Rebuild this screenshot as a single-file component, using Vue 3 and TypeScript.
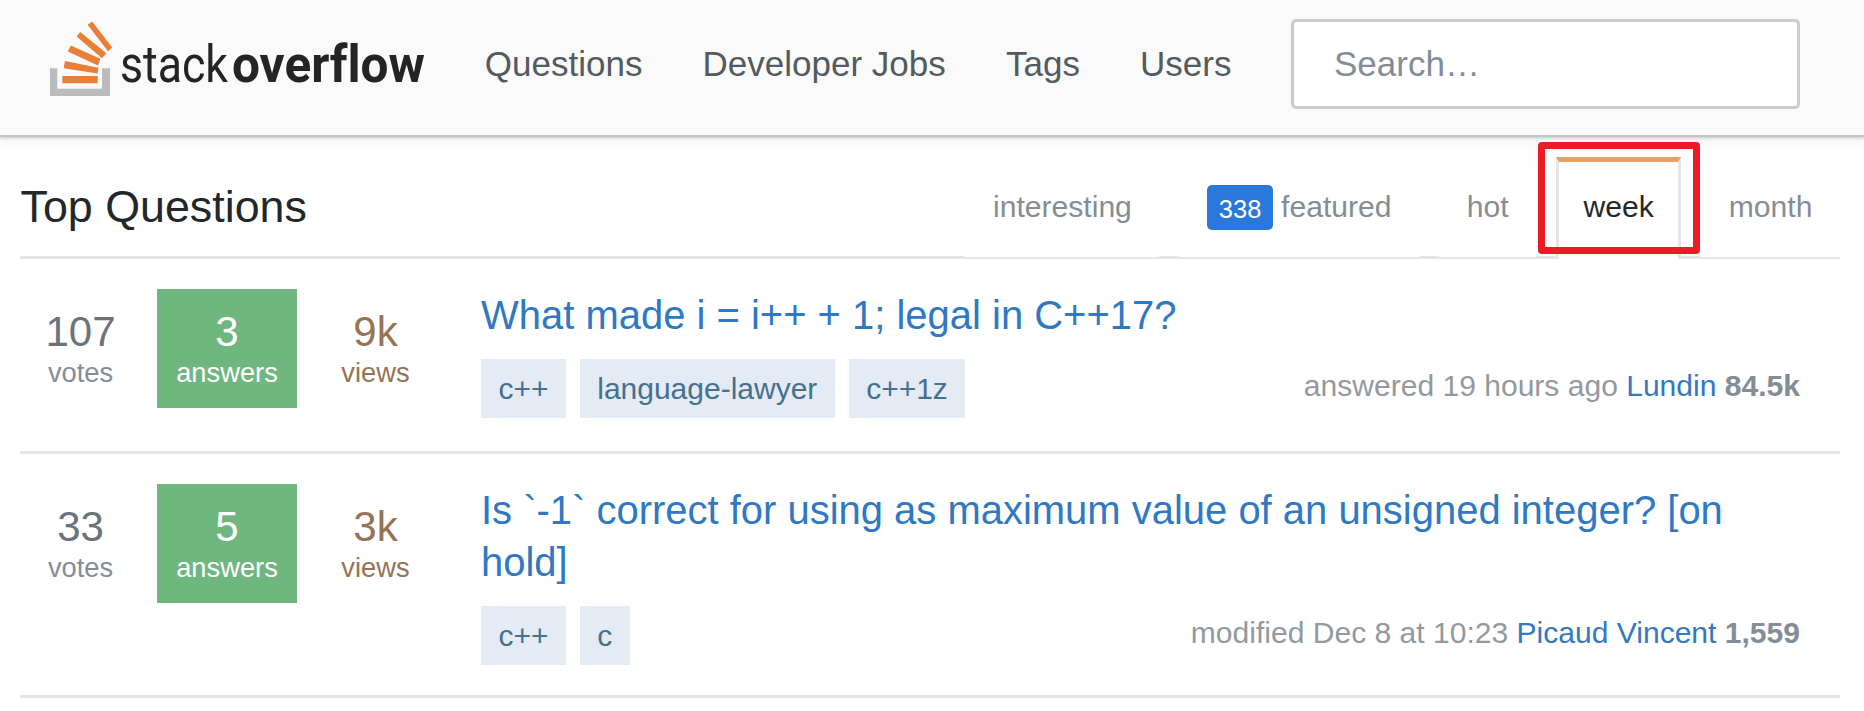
<script setup lang="ts">
interface Tab {
  label: string
  count?: number
  active?: boolean
}

interface Question {
  title: string
  votes: string
  answers: string
  views: string
  tags: string[]
  action: string
  user: string
  reputation: string
}

const links: string[] = ['Questions', 'Developer Jobs', 'Tags', 'Users']

const tabs: Tab[] = [
  { label: 'interesting' },
  { label: 'featured', count: 338 },
  { label: 'hot' },
  { label: 'week', active: true },
  { label: 'month' },
]

const questions: Question[] = [
  {
    title: 'What made i = i++ + 1; legal in C++17?',
    votes: '107',
    answers: '3',
    views: '9k',
    tags: ['c++', 'language-lawyer', 'c++1z'],
    action: 'answered 19 hours ago',
    user: 'Lundin',
    reputation: '84.5k',
  },
  {
    title: 'Is `-1` correct for using as maximum value of an unsigned integer? [on hold]',
    votes: '33',
    answers: '5',
    views: '3k',
    tags: ['c++', 'c'],
    action: 'modified Dec 8 at 10:23',
    user: 'Picaud Vincent',
    reputation: '1,559',
  },
]
</script>

<template>
  <div class="page">
    <header class="topbar">
      <svg class="logo" width="380" height="90" viewBox="50 19 380 90" role="img" aria-label="stack overflow">
        <path d="M50 68.3h7.3v20.4H102V68.3h8V96H50z" fill="#bbbbbb" />
        <g fill="#e87f37">
          <path d="M62.3 76h35.4v7.3H62.3z" />
          <path d="M64.9 61 98.4 67.8 97.6 73.4 63.7 68.3z" />
          <path d="M70.8 45.6 100.3 58.8 98 65.4 67.8 51.5z" />
          <path d="M80.2 31.9 106.5 53.2 102 58.2 76.6 36.4z" />
          <path d="M92.2 21.6 112.2 47.6 108 51.2 87.6 24.8z" />
        </g>
        <text class="word regular" x="120" y="82" textLength="108" lengthAdjust="spacingAndGlyphs">stack</text>
        <text class="word heavy" x="232" y="82" textLength="193" lengthAdjust="spacingAndGlyphs">overflow</text>
      </svg>
      <nav class="links">
        <a v-for="link in links" :key="link">{{ link }}</a>
      </nav>
      <input class="search" type="text" placeholder="Search…" />
    </header>

    <main class="main">
      <div class="bar">
        <h1>Top Questions</h1>
        <div class="tabs">
          <a v-for="tab in tabs" :key="tab.label" class="tab" :class="{ active: tab.active }">
            <span v-if="tab.count" class="badge">{{ tab.count }}</span>
            <span>{{ tab.label }}</span>
            <span v-if="tab.active" class="marker"></span>
          </a>
        </div>
      </div>

      <article v-for="q in questions" :key="q.title" class="question">
        <div class="stat votes">
          <span class="num">{{ q.votes }}</span>
          <span class="label">votes</span>
        </div>
        <div class="stat answers">
          <span class="num">{{ q.answers }}</span>
          <span class="label">answers</span>
        </div>
        <div class="stat views">
          <span class="num">{{ q.views }}</span>
          <span class="label">views</span>
        </div>
        <div class="summary">
          <h2>{{ q.title }}</h2>
          <div class="details">
            <div class="tags">
              <span v-for="tag in q.tags" :key="tag" class="tag">{{ tag }}</span>
            </div>
            <div class="meta">
              {{ q.action }} <a>{{ q.user }}</a> <b>{{ q.reputation }}</b>
            </div>
          </div>
        </div>
      </article>
    </main>
  </div>
</template>

<style>
body {
  background: #fff;
}
</style>

<style scoped>
.page {
  height: 711px;
  overflow: hidden;
  font-family: 'Liberation Sans', Arial, sans-serif;
  background: linear-gradient(#f7f7f7 137px, #fcfcfc 148px, #fff 172px);
}
.topbar {
  box-sizing: border-box;
  height: 137px;
  padding: 19px 64px 26px 50px;
  display: flex;
  align-items: center;
  background: #fafafa;
  border-bottom: 2px solid #c4c5c6;
  box-shadow: 0 1px 3px rgba(0, 0, 0, 0.2);
}
.logo {
  flex: none;
  overflow: visible;
}
.word {
  font-family: Roboto, 'Liberation Sans', sans-serif;
  font-size: 52px;
  font-variant-ligatures: none;
  fill: #222426;
}
.regular {
  font-weight: 400;
}
.heavy {
  font-weight: 700;
}
.links {
  display: flex;
  gap: 60.2px;
  margin-left: 54.8px;
  font-size: 35px;
  line-height: 90px;
  color: #535a60;
  white-space: nowrap;
}
.search {
  box-sizing: border-box;
  width: 509px;
  height: 90px;
  margin: 0 0 0 auto;
  padding: 0 40px;
  border: 3px solid #c8ccd0;
  border-radius: 5px;
  background: #fff;
  font: 35px 'Liberation Sans', Arial, sans-serif;
  outline: none;
}
.search::placeholder {
  color: #848d95;
  opacity: 1;
}
.main {
  padding: 20px 24px 0 20px;
}
.bar {
  display: flex;
  justify-content: space-between;
  height: 99px;
  border-bottom: 3px solid #e4e6e6;
}
h1,
h2 {
  margin: 0;
  font-weight: 400;
}
h1 {
  padding-left: 0.5px;
  font-size: 44.8px;
  line-height: 99px;
  color: #242729;
}
.tabs {
  display: flex;
  gap: 20px;
  height: 100px;
}
.tab {
  box-sizing: border-box;
  display: flex;
  align-items: center;
  gap: 8px;
  height: 100px;
  padding: 0 27.6px;
  border-bottom: 1px solid #fff;
  font-size: 30.1px;
  color: #848d95;
}
.tab.active {
  position: relative;
  align-items: flex-start;
  height: 102px;
  padding: 0 24.4px;
  border: 3px solid #e4e6e6;
  border-top: 5px solid #e8a064;
  border-bottom: 0;
  background: #fff;
  color: #242729;
  line-height: 89px;
}
.badge {
  width: 66px;
  height: 45px;
  margin-top: 2px;
  border-radius: 5px;
  background: #2a79da;
  color: #fff;
  font-size: 25.5px;
  line-height: 48px;
  text-align: center;
}
.marker {
  position: absolute;
  box-sizing: border-box;
  top: -20px;
  left: -21px;
  right: -21.5px;
  height: 112px;
  border: 7px solid #ed1c24;
  border-radius: 4px;
}
.question {
  box-sizing: border-box;
  display: flex;
  align-items: flex-start;
  min-height: 195px;
  padding: 30px 0;
  border-bottom: 3px solid #e4e6e6;
}
.stat {
  flex: none;
  box-sizing: border-box;
  display: flex;
  flex-direction: column;
  height: 119px;
  padding-top: 20px;
  text-align: center;
}
.num {
  font-size: 42px;
  line-height: 46px;
}
.label {
  font-size: 27.3px;
  line-height: 35px;
}
.votes {
  width: 121px;
  color: #6a737c;
}
.votes .label {
  color: #848d95;
}
.answers {
  width: 140px;
  margin: 0 20px 0 16px;
  background: #6fb67f;
  color: #fff;
}
.views {
  width: 117px;
  margin-right: 47px;
  color: #957355;
}
.summary {
  flex: 1;
  padding-right: 40px;
}
h2 {
  font-size: 39.97px;
  line-height: 52px;
  color: #2f78c4;
}
.details {
  display: flex;
  justify-content: space-between;
  margin-top: 18px;
}
.tags {
  display: flex;
  gap: 14px;
}
.tag {
  height: 59px;
  padding: 0 17.4px;
  background: #e4ebf4;
  color: #45708f;
  font-size: 30px;
  line-height: 60px;
}
.meta {
  font-size: 30.05px;
  line-height: 53px;
  color: #93999e;
  white-space: nowrap;
}
.meta a {
  color: #3478bf;
}
.meta b {
  color: #848d95;
}
</style>
